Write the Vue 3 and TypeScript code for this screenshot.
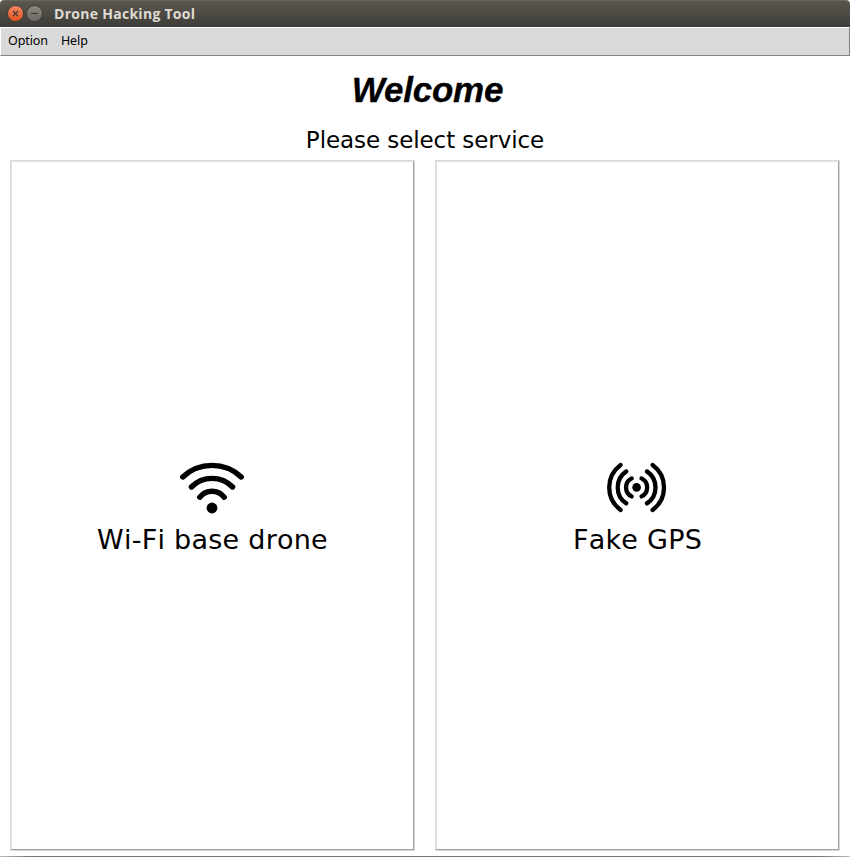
<script setup lang="ts">
interface Service {
  id: string
  label: string
  strokeWidth: number
  dot: { cx: number; cy: number; r: number }
  arcs: string[]
}

const menus: string[] = ['Option', 'Help']

const services: Service[] = [
  {
    id: 'wifi',
    label: 'Wi-Fi base drone',
    strokeWidth: 5.4,
    dot: { cx: 32, cy: 48, r: 5.4 },
    arcs: [
      'M2.8 17A42.5 42.5 0 0 1 61.2 17',
      'M11.4 27A29 29 0 0 1 52.6 27',
      'M19.8 37.2A15.6 15.6 0 0 1 44.2 37.2',
    ],
  },
  {
    id: 'gps',
    label: 'Fake GPS',
    strokeWidth: 4.3,
    dot: { cx: 31.6, cy: 27.4, r: 4.3 },
    arcs: [
      'M26.7 18.4A10 10 0 0 0 26.7 36.4',
      'M21.3 11.4A19.2 19.2 0 0 0 21.3 43.4',
      'M15.6 4.9A27.9 27.9 0 0 0 15.6 49.9',
      'M36.5 18.4A10 10 0 0 1 36.5 36.4',
      'M41.9 11.4A19.2 19.2 0 0 1 41.9 43.4',
      'M47.6 4.9A27.9 27.9 0 0 1 47.6 49.9',
    ],
  },
]
</script>

<template>
  <div class="window">
    <header class="titlebar">
      <button class="control close" aria-label="Close">
        <svg viewBox="0 0 15 15"><path d="M5 5l5 5M10 5l-5 5" /></svg>
      </button>
      <button class="control minimize" aria-label="Minimize">
        <svg viewBox="0 0 15 15"><path d="M4 7.5h7" /></svg>
      </button>
      <span class="title">Drone Hacking Tool</span>
    </header>
    <nav class="menubar">
      <span v-for="menu in menus" :key="menu" class="menu">{{ menu }}</span>
    </nav>
    <main class="content">
      <h1 class="heading">Welcome</h1>
      <p class="prompt">Please select service</p>
      <div class="services">
        <button v-for="service in services" :key="service.id" class="service" :class="service.id">
          <span class="face">
            <svg class="icon" viewBox="0 0 64 60">
              <path v-for="arc in service.arcs" :key="arc" :d="arc" :stroke-width="service.strokeWidth" />
              <circle :cx="service.dot.cx" :cy="service.dot.cy" :r="service.dot.r" />
            </svg>
            <span class="label">{{ service.label }}</span>
          </span>
        </button>
      </div>
    </main>
    <div class="edge"></div>
  </div>
</template>

<style>
body {
  margin: 0;
  background: #fff;
}
</style>

<style scoped>
.window {
  display: flex;
  flex-direction: column;
  width: 850px;
  height: 857px;
  overflow: hidden;
  background: #fff;
  color: #000;
  font-family: "DejaVu Sans", sans-serif;
}
.titlebar {
  box-sizing: border-box;
  display: flex;
  align-items: center;
  flex: none;
  height: 27px;
  padding: 0 0 1px 7px;
  border-top: 1px solid #68655a;
  border-radius: 4px 4px 0 0;
  background: linear-gradient(#5a574e, #3d3c38);
}
.control {
  box-sizing: border-box;
  width: 17px;
  height: 17px;
  margin-right: 2px;
  padding: 0;
  border: 1px solid #403e38;
  border-radius: 50%;
}
.control svg {
  display: block;
  width: 15px;
  height: 15px;
  fill: none;
  stroke: #3b3934;
  stroke-width: 1.1;
}
.close {
  background: linear-gradient(#f58462, #e2541f);
}
.minimize {
  background: linear-gradient(#8b8981, #6a6861);
}
.title {
  margin-left: 9px;
  color: #dfdbd2;
  font: bold 14px/26px "Open Sans", sans-serif;
  letter-spacing: 0.28px;
  white-space: nowrap;
}
.menubar {
  box-sizing: border-box;
  display: flex;
  flex: none;
  gap: 13px;
  height: 29px;
  padding-left: 7px;
  border: 1px solid #fff;
  border-right-color: #828282;
  border-bottom-color: #828282;
  background: #d9d9d9;
}
.menu {
  font: 12.5px/26px "Noto Sans", sans-serif;
  letter-spacing: -0.1px;
}
.content {
  display: flex;
  flex: 1;
  flex-direction: column;
  min-height: 0;
}
.heading {
  margin: 13px 0 0 5px;
  font: italic bold 35px/42px "Liberation Sans", sans-serif;
  letter-spacing: -0.2px;
  text-align: center;
  -webkit-text-stroke: 0.3px #000;
}
.prompt {
  margin: 14px 0 0;
  font-size: 23px;
  line-height: 30px;
  letter-spacing: -0.08px;
  text-align: center;
}
.services {
  display: flex;
  gap: 20px;
  margin: 5px 10px 0;
  height: 691px;
}
.service {
  box-sizing: border-box;
  flex: 1;
  padding: 0;
  border: 1px solid #d9d9d9;
  background: #fff;
  color: #000;
  font-family: inherit;
}
.face {
  box-sizing: border-box;
  display: flex;
  flex-direction: column;
  align-items: center;
  height: 689px;
  padding-top: 298px;
  border: 1px solid #e2e2e2;
  border-right-color: #a0a0a0;
  border-bottom-color: #a0a0a0;
}
.icon {
  width: 64px;
  height: 60px;
  margin-right: 2px;
  fill: none;
  stroke: #000;
  stroke-linecap: round;
}
.icon circle {
  fill: #000;
  stroke: none;
}
.label {
  margin-top: 1px;
  font-size: 27px;
  line-height: 38px;
  font-kerning: none;
  letter-spacing: 0.25px;
  white-space: nowrap;
}
.edge {
  flex: none;
  height: 1px;
  background: linear-gradient(90deg, #bbb, #777 30px, #777 820px, #bbb);
}
</style>
